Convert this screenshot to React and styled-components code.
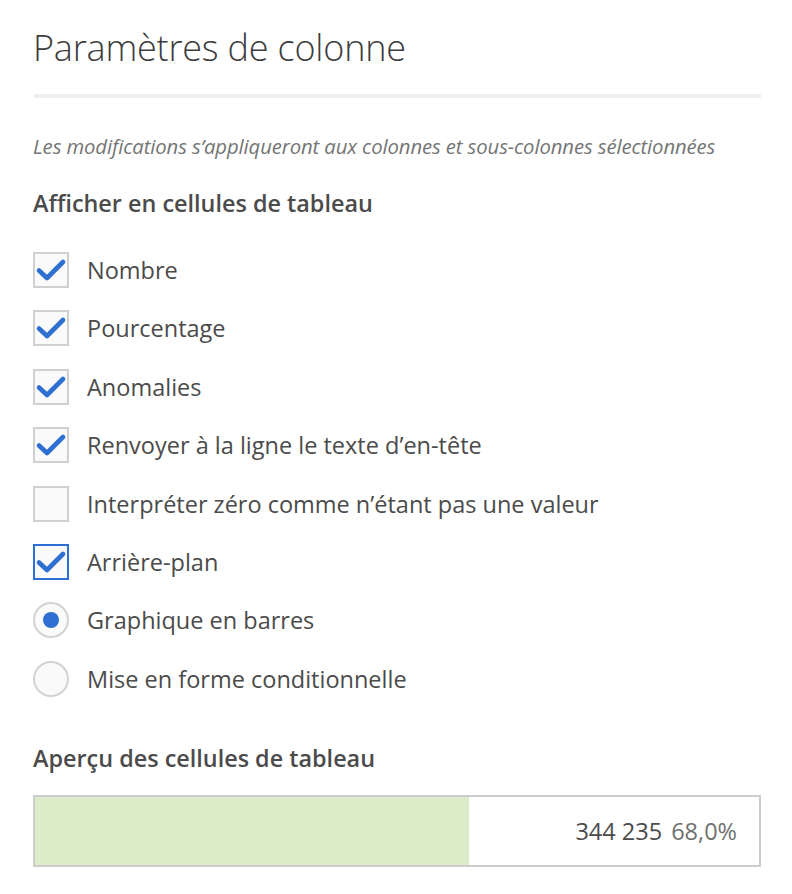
import React from "react";
import styled, { createGlobalStyle } from "styled-components";

const Global = createGlobalStyle`
  html, body { margin: 0; padding: 0; background: #fff; }
  body { font-family: "Open Sans", "Noto Sans", sans-serif; color: #4b4b4b; }
`;

const Panel = styled.div`
  width: 792px;
  box-sizing: border-box;
  padding: 22px 31px 0 33px;
  display: flex;
  flex-direction: column;
`;

const Title = styled.h1`
  margin: 0;
  font-weight: 300;
  font-size: 36px;
  line-height: 52px;
  color: #3c3c3c;
  letter-spacing: -0.2px;
`;

const Divider = styled.hr`
  margin: 20px 0 0 1px;
  height: 4px;
  border: none;
  background: #eeeeee;
`;

const Note = styled.p`
  margin: 34px 0 0;
  font-style: italic;
  font-size: 20.3px;
  line-height: 28px;
  color: #747474;
  letter-spacing: -0.1px;
`;

const Heading = styled.h2`
  margin: ${(p) => p.$top}px 0 0;
  font-size: 23.4px;
  font-weight: 600;
  line-height: 32px;
  color: #4b4b4b;
`;

const Options = styled.div`
  margin-top: 33px;
  display: flex;
  flex-direction: column;
  gap: 22.4px;
`;

const Row = styled.label`
  display: flex;
  align-items: center;
  gap: 18px;
  height: 36px;
  font-size: 23.5px;
  color: #4b4b4b;
`;

const Box = styled.span`
  box-sizing: border-box;
  width: 36px;
  height: 36px;
  border: 2px solid ${(p) => (p.$focus ? "#2d6fd4" : "#d0d0d0")};
  background: #fafafa;
  display: flex;
  align-items: center;
  justify-content: center;
  flex-shrink: 0;
`;

const Radio = styled.span`
  box-sizing: border-box;
  width: 36px;
  height: 36px;
  border-radius: 50%;
  border: 2px solid #d3d3d3;
  background: #fafafa;
  display: flex;
  align-items: center;
  justify-content: center;
  flex-shrink: 0;
`;

const Dot = styled.span`
  width: 16px;
  height: 16px;
  border-radius: 50%;
  background: #2e6fd2;
`;

const Preview = styled.div`
  margin-top: 21px;
  box-sizing: border-box;
  height: 72px;
  border: 2px solid #cccccc;
  position: relative;
  display: flex;
  align-items: center;
  justify-content: flex-end;
  padding-right: 22px;
  font-size: 23.5px;
`;

const Bar = styled.div`
  position: absolute;
  left: 0;
  top: 0;
  bottom: 0;
  background: #dcecc9;
`;

const Value = styled.span`
  position: relative;
  color: #4b4b4b;
`;

const Percent = styled.span`
  position: relative;
  margin-left: 9px;
  color: #707070;
`;

const Check = () => (
  <svg width="32" height="26" viewBox="0 0 32 26">
    <path
      d="M4 13.5 L12 21 L28 5"
      fill="none"
      stroke="#2e6fd2"
      strokeWidth="4.6"
      strokeLinecap="round"
      strokeLinejoin="round"
    />
  </svg>
);

const checks = [
  { label: "Nombre", on: true },
  { label: "Pourcentage", on: true },
  { label: "Anomalies", on: true },
  { label: "Renvoyer à la ligne le texte d’en-tête", on: true },
  { label: "Interpréter zéro comme n’étant pas une valeur", on: false },
  { label: "Arrière-plan", on: true, focus: true },
];

const radios = [
  { label: "Graphique en barres", on: true },
  { label: "Mise en forme conditionnelle", on: false },
];

export default function App() {
  return (
    <Panel>
      <Global />
      <Title>Paramètres de colonne</Title>
      <Divider />
      <Note>Les modifications s’appliqueront aux colonnes et sous-colonnes sélectionnées</Note>
      <Heading $top={27}>Afficher en cellules de tableau</Heading>
      <Options>
        {checks.map((c) => (
          <Row key={c.label}>
            <Box $focus={c.focus}>{c.on && <Check />}</Box>
            {c.label}
          </Row>
        ))}
        {radios.map((r) => (
          <Row key={r.label}>
            <Radio>{r.on && <Dot />}</Radio>
            {r.label}
          </Row>
        ))}
      </Options>
      <Heading $top={45}>Aperçu des cellules de tableau</Heading>
      <Preview>
        <Bar style={{ width: "60%" }} />
        <Value>344 235</Value>
        <Percent>68,0%</Percent>
      </Preview>
    </Panel>
  );
}
